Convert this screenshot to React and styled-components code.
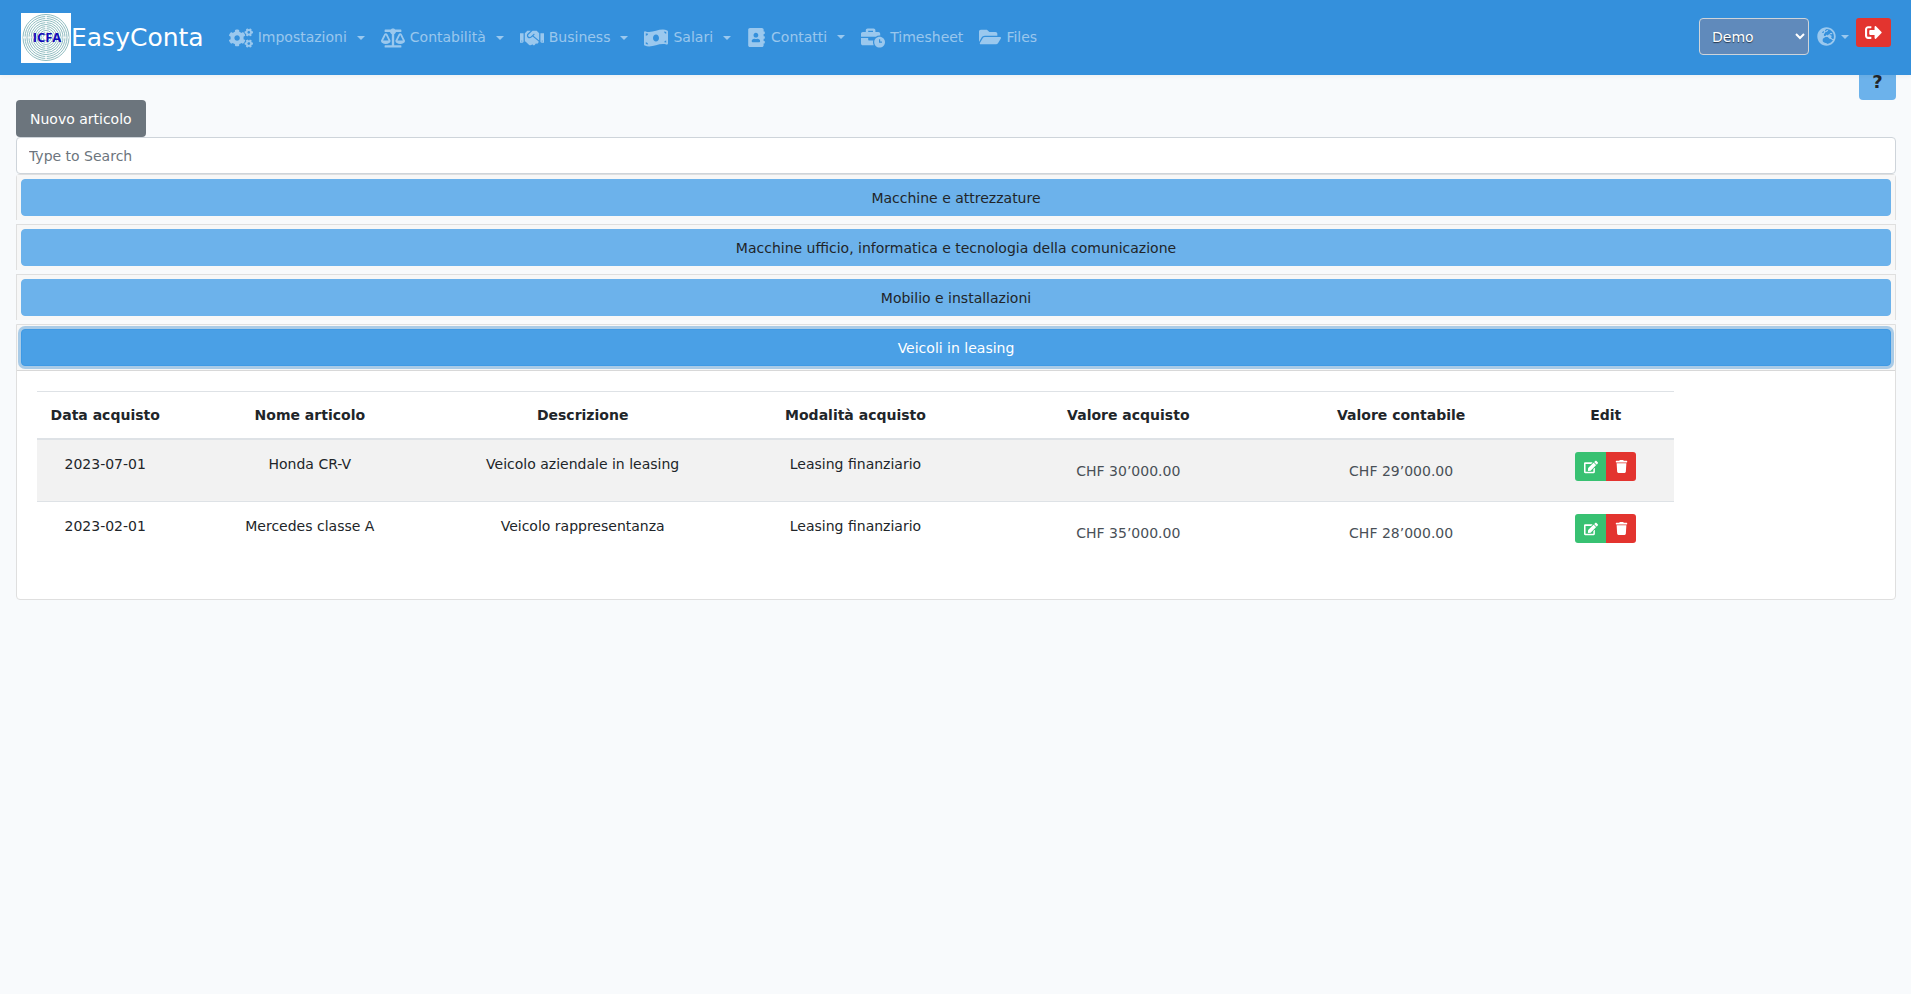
import { useState } from 'react';
import styled, { createGlobalStyle } from 'styled-components';
import {
  FaCogs,
  FaBalanceScale,
  FaHandshake,
  FaMoneyBillWave,
  FaAddressBook,
  FaBusinessTime,
  FaFolderOpen,
  FaGlobeEurope,
  FaSignOutAlt,
  FaEdit,
  FaTrash,
} from 'react-icons/fa';

const menu = [
  { label: 'Impostazioni', Icon: FaCogs, size: 24, dropdown: true },
  { label: 'Contabilità', Icon: FaBalanceScale, size: 24, dropdown: true },
  { label: 'Business', Icon: FaHandshake, size: 24, dropdown: true },
  { label: 'Salari', Icon: FaMoneyBillWave, size: 24, dropdown: true },
  { label: 'Contatti', Icon: FaAddressBook, size: 19, dropdown: true },
  { label: 'Timesheet', Icon: FaBusinessTime, size: 24 },
  { label: 'Files', Icon: FaFolderOpen, size: 22 },
];

const categories = [
  'Macchine e attrezzature',
  'Macchine ufficio, informatica e tecnologia della comunicazione',
  'Mobilio e installazioni',
  'Veicoli in leasing',
];

const articles = [
  {
    date: '2023-07-01',
    name: 'Honda CR-V',
    description: 'Veicolo aziendale in leasing',
    mode: 'Leasing finanziario',
    purchase: 'CHF 30’000.00',
    book: 'CHF 29’000.00',
  },
  {
    date: '2023-02-01',
    name: 'Mercedes classe A',
    description: 'Veicolo rappresentanza',
    mode: 'Leasing finanziario',
    purchase: 'CHF 35’000.00',
    book: 'CHF 28’000.00',
  },
];

const Logo = () => (
  <svg width="50" height="50" viewBox="0 0 50 50" role="img" aria-label="ICFA">
    <rect width="50" height="50" fill="#fff" />
    <g fill="none" stroke="#8fbcc0" strokeWidth="1">
      {[23, 21, 19, 17, 15, 13, 11, 9, 7, 5, 3].map((r) => (
        <circle key={r} cx="25" cy="24.5" r={r} />
      ))}
    </g>
    <path d="M25 3v43M2 24.5h46" stroke="#fff" strokeWidth="2" strokeDasharray="3 2" opacity="0.7" />
    <text
      x="26"
      y="29"
      textAnchor="middle"
      fontFamily="Open Sans, sans-serif"
      fontSize="13"
      fontWeight="700"
      fill="#1008b8"
    >
      ICFA
    </text>
  </svg>
);

const App = () => {
  const [open, setOpen] = useState('Veicoli in leasing');
  const [search, setSearch] = useState('');

  return (
    <>
      <GlobalStyle />
      <Navbar>
        <Brand href="#">
          <Logo />
          EasyConta
        </Brand>
        <Menu>
          {menu.map(({ label, Icon, size, dropdown }) => (
            <li key={label}>
              <NavLink href="#">
                <Icon size={size} />
                <span>{label}</span>
                {dropdown && <Caret />}
              </NavLink>
            </li>
          ))}
        </Menu>
        <Tools>
          <CompanySelect aria-label="Azienda" defaultValue="Demo">
            <option>Demo</option>
          </CompanySelect>
          <LangLink href="#" aria-label="Lingua">
            <FaGlobeEurope size={19} />
            <Caret />
          </LangLink>
          <LogoutButton type="button" aria-label="Esci">
            <FaSignOutAlt size={17} />
          </LogoutButton>
        </Tools>
      </Navbar>
      <HelpButton type="button">?</HelpButton>

      <Main>
        <NewButton type="button">Nuovo articolo</NewButton>
        <SearchInput
          type="text"
          aria-label="Cerca"
          placeholder="Type to Search"
          value={search}
          onChange={(e) => {
            setSearch(e.target.value);
          }}
        />
        <Accordion>
          {categories.map((category) => (
            <Card key={category}>
              <CardHeader $open={open === category}>
                <CategoryButton
                  type="button"
                  $open={open === category}
                  aria-expanded={open === category}
                  onClick={() => setOpen(category)}
                >
                  {category}
                </CategoryButton>
              </CardHeader>
              {open === category && (
                <CardBody>
                  <Table>
                    <thead>
                      <tr>
                        <Th $width="8.333%">Data acquisto</Th>
                        <Th>Nome articolo</Th>
                        <Th>Descrizione</Th>
                        <Th>Modalità acquisto</Th>
                        <Th>Valore acquisto</Th>
                        <Th>Valore contabile</Th>
                        <Th $width="8.333%">Edit</Th>
                      </tr>
                    </thead>
                    <tbody>
                      {articles.map((article) => (
                        <Row key={article.name}>
                          <Td>{article.date}</Td>
                          <Td>{article.name}</Td>
                          <Td>{article.description}</Td>
                          <Td>{article.mode}</Td>
                          <Td>
                            <Amount>{article.purchase}</Amount>
                          </Td>
                          <Td>
                            <Amount>{article.book}</Amount>
                          </Td>
                          <Td>
                            <ButtonGroup>
                              <EditButton type="button" aria-label="Modifica">
                                <FaEdit size={14} />
                              </EditButton>
                              <DeleteButton type="button" aria-label="Elimina">
                                <FaTrash size={13} />
                              </DeleteButton>
                            </ButtonGroup>
                          </Td>
                        </Row>
                      ))}
                    </tbody>
                  </Table>
                </CardBody>
              )}
            </Card>
          ))}
        </Accordion>
      </Main>
    </>
  );
};

export default App;

const GlobalStyle = createGlobalStyle`
  * {
    box-sizing: border-box;
  }

  body {
    margin: 0;
    background: #f8fafc;
    color: #212529;
    font-family: 'DejaVu Sans', sans-serif;
    font-size: 14px;
    line-height: 23px;
  }

  button, input, select {
    margin: 0;
    font-family: inherit;
    font-size: inherit;
    line-height: inherit;
  }
`;

const Navbar = styled.nav`
  position: relative;
  z-index: 1;
  display: flex;
  align-items: center;
  height: 75px;
  padding: 0 16px 0 21px;
  background: #3490dc;
  box-shadow: 0 2px 4px rgba(0, 0, 0, 0.04);
`;

const Brand = styled.a`
  display: flex;
  align-items: center;
  margin-right: 17px;
  color: #fff;
  font-size: 25px;
  text-decoration: none;
`;

const Menu = styled.ul`
  display: flex;
  margin: 0;
  padding: 0;
  list-style: none;
`;

const NavLink = styled.a`
  display: flex;
  align-items: center;
  gap: 5px;
  padding: 7px 8px;
  color: rgba(255, 255, 255, 0.5);
  text-decoration: none;
`;

const Caret = styled.span`
  margin-left: 5px;
  border-top: 4px solid;
  border-right: 4px solid transparent;
  border-left: 4px solid transparent;
`;

const Tools = styled.div`
  display: flex;
  align-items: center;
  margin: 0 4px 2px auto;
`;

const CompanySelect = styled.select`
  width: 110px;
  height: 37px;
  padding: 6px 8px;
  border: 1px solid #ced4da;
  border-radius: 4px;
  background: #608abb;
  color: #fff;
  text-shadow: 0 1px 1px rgba(0, 0, 0, 0.6);
`;

const LangLink = styled(NavLink)`
  gap: 0;
  padding-right: 7px;
`;

const LogoutButton = styled.button`
  display: flex;
  align-items: center;
  align-self: flex-start;
  height: 29px;
  padding: 0 9px;
  border: 0;
  border-radius: 3px;
  background: #e3342f;
  color: #fff;
`;

const HelpButton = styled.button`
  display: block;
  width: 37px;
  height: 37px;
  margin: -12px 15px 0 auto;
  border: 0;
  border-radius: 4px;
  background: #6cb2eb;
  color: #212529;
  font-size: 18px;
  font-weight: 700;
`;

const Main = styled.main`
  padding: 0 15px 24px 16px;
`;

const NewButton = styled.button`
  display: block;
  height: 37px;
  padding: 2px 14px 0;
  border: 0;
  border-radius: 4px;
  background: #6c757d;
  color: #fff;
`;

const SearchInput = styled.input`
  display: block;
  width: 100%;
  height: 37px;
  padding: 0 12px;
  border: 1px solid #ced4da;
  border-radius: 4px;
  background: #fff;
  color: #495057;

  &::placeholder {
    color: #6c757d;
  }
`;

const Accordion = styled.div`
  display: flex;
  flex-direction: column;
  gap: 4px;
`;

const Card = styled.section`
  border: 1px solid #dfdfdf;
  border-bottom: 0;
  background: #fff;

  &:first-child {
    border-radius: 4px 4px 0 0;
  }

  &:last-child {
    border-bottom: 1px solid #dfdfdf;
    border-radius: 0 0 4px 4px;
  }
`;

const CardHeader = styled.div`
  padding: 4px;
  border-bottom: ${({ $open }) => ($open ? '1px solid #d8d8d8' : '0')};
  background: #f7f7f7;
`;

const CategoryButton = styled.button`
  display: block;
  width: 100%;
  height: 37px;
  padding: 2px 12px 0;
  border: 1px solid ${({ $open }) => ($open ? '#3f9ae5' : '#6cb2eb')};
  border-radius: 4px;
  background: ${({ $open }) => ($open ? '#4aa0e6' : '#6cb2eb')};
  box-shadow: ${({ $open }) => ($open ? '0 0 0 3px #a9cbe7' : 'none')};
  color: ${({ $open }) => ($open ? '#fff' : '#212529')};
`;

const CardBody = styled.div`
  padding: 20px;
`;

const Table = styled.table`
  width: calc(100% - 201px);
  margin-bottom: 16px;
  border-collapse: collapse;
  table-layout: fixed;
  text-align: center;
`;

const Th = styled.th`
  width: ${({ $width }) => $width || '16.666%'};
  padding: 12px 0 11px;
  border-top: 1px solid #dee2e6;
  border-bottom: 2px solid #dee2e6;
`;

const Row = styled.tr`
  border-top: 1px solid #dee2e6;

  &:nth-child(odd) {
    background: #f2f2f2;
  }
`;

const Td = styled.td`
  padding: 13px 12px 12px;
  vertical-align: top;

  &:last-child {
    padding-top: 12px;
  }
`;

const Amount = styled.div`
  padding: 7px 0 6px;
  color: #495057;
`;

const ButtonGroup = styled.div`
  display: inline-flex;
`;

const EditButton = styled.button`
  display: flex;
  align-items: center;
  justify-content: center;
  width: 31px;
  height: 29px;
  padding: 0;
  border: 0;
  border-radius: 3px 0 0 3px;
  background: #38c172;
  color: #fff;
`;

const DeleteButton = styled(EditButton)`
  width: 30px;
  border-radius: 0 3px 3px 0;
  background: #e3342f;
`;
